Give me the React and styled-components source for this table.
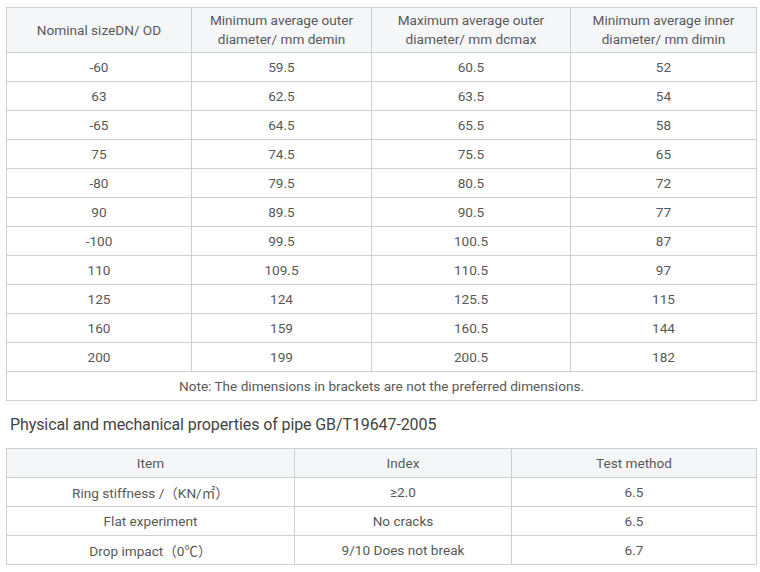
import React from 'react';
import styled, { createGlobalStyle } from 'styled-components';

// ─── Data ─────────────────────────────────────────────────────────────────────
const sizes = [
  ['-60', '59.5', '60.5', '52'],
  ['63', '62.5', '63.5', '54'],
  ['-65', '64.5', '65.5', '58'],
  ['75', '74.5', '75.5', '65'],
  ['-80', '79.5', '80.5', '72'],
  ['90', '89.5', '90.5', '77'],
  ['-100', '99.5', '100.5', '87'],
  ['110', '109.5', '110.5', '97'],
  ['125', '124', '125.5', '115'],
  ['160', '159', '160.5', '144'],
  ['200', '199', '200.5', '182'],
];

const props = [
  ['Ring stiffness /（KN/㎡）', '≥2.0', '6.5'],
  ['Flat experiment', 'No cracks', '6.5'],
  ['Drop impact（0℃）', '9/10 Does not break', '6.7'],
];

// ─── Styles ───────────────────────────────────────────────────────────────────
const GlobalStyle = createGlobalStyle`
  body {
    margin: 0;
    background: #fff;
    font-family: Roboto, "Noto Sans CJK SC", sans-serif;
  }
`;

const Page = styled.div`
  padding: 7px 5px 0 6px;
  display: flex;
  flex-direction: column;
`;

const Table = styled.table`
  width: 750px;
  border-collapse: collapse;
  table-layout: fixed;
  font-size: 13.6px;
  color: #595959;
`;

const Th = styled.th`
  background: #f5f6f8;
  border: 1px solid #cfcfcf;
  font-weight: 400;
  height: ${({ $h }) => $h}px;
  padding: 0 8px;
  line-height: 19px;
  text-align: center;
`;

const Td = styled.td`
  border: 1px solid #cfcfcf;
  height: 28px;
  padding: 0 8px;
  text-align: center;
`;

const Title = styled.h3`
  margin: 12px 0 0 4px;
  height: 35px;
  font-size: 16px;
  font-weight: 400;
  letter-spacing: -0.1px;
  color: #444;
  line-height: 24px;
`;

// ─── Component ────────────────────────────────────────────────────────────────
export default function App() {
  return (
    <>
      <GlobalStyle />
      <Page>
        <Table>
          <colgroup>
            <col style={{ width: 185 }} />
            <col style={{ width: 180 }} />
            <col style={{ width: 199 }} />
            <col style={{ width: 186 }} />
          </colgroup>
          <thead>
            <tr>
              <Th $h={44}>Nominal sizeDN/ OD</Th>
              <Th $h={44}>Minimum average outer diameter/ mm demin</Th>
              <Th $h={44}>Maximum average outer diameter/ mm dcmax</Th>
              <Th $h={44}>Minimum average inner diameter/ mm dimin</Th>
            </tr>
          </thead>
          <tbody>
            {sizes.map((r) => (
              <tr key={r[0]}>
                {r.map((c, i) => <Td key={i}>{c}</Td>)}
              </tr>
            ))}
            <tr>
              <Td colSpan={4}>Note: The dimensions in brackets are not the preferred dimensions.</Td>
            </tr>
          </tbody>
        </Table>

        <Title>Physical and mechanical properties of pipe GB/T19647-2005</Title>

        <Table>
          <colgroup>
            <col style={{ width: 288 }} />
            <col style={{ width: 217 }} />
            <col style={{ width: 245 }} />
          </colgroup>
          <thead>
            <tr>
              <Th $h={28}>Item</Th>
              <Th $h={28}>Index</Th>
              <Th $h={28}>Test method</Th>
            </tr>
          </thead>
          <tbody>
            {props.map((r) => (
              <tr key={r[0]}>
                {r.map((c, i) => <Td key={i}>{c}</Td>)}
              </tr>
            ))}
          </tbody>
        </Table>
      </Page>
    </>
  );
}
